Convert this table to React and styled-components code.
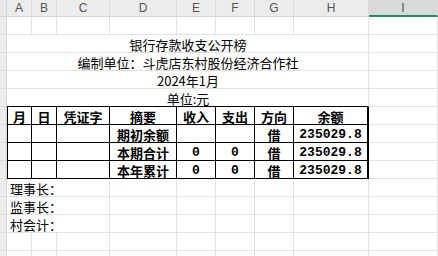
import React from "react";
import styled, { createGlobalStyle, css } from "styled-components";

const Global = createGlobalStyle`
  html, body { margin: 0; padding: 0; background: #fff; }
  body { font-family: "Noto Sans CJK SC", "Noto Sans", sans-serif; overflow: hidden; }
`;

const COLS = ["A", "B", "C", "D", "E", "F", "G", "H", "I"];

const Sheet = styled.div`
  display: grid;
  grid-template-columns: 7px 25px 25px 53px 67px 39px 39px 39px 75px 69px;
  grid-template-rows: 17px;
  grid-auto-rows: 18px;
  width: 438px;
  height: 256px;
  overflow: hidden;
`;

const Corner = styled.div`
  background: #e9e9e9;
  border-right: 1px solid #d6d6d6;
  border-bottom: 1px solid #d6d6d6;
  box-sizing: border-box;
`;

const ColHead = styled.div`
  box-sizing: border-box;
  background: ${(p) => (p.$active ? "#d9d9d9" : "#ececec")};
  border-right: 1px solid #d9d9d9;
  border-bottom: ${(p) => (p.$active ? "2px solid #1a8f62" : "1px solid #d6d6d6")};
  display: flex;
  align-items: center;
  justify-content: center;
  font-family: "Liberation Sans", Arial, sans-serif;
  font-size: 12px;
  color: #555;
  padding-top: ${(p) => (p.$active ? "1px" : "0")};
`;

const RowHead = styled.div`
  box-sizing: border-box;
  background: #ececec;
  border-right: 1px solid #d6d6d6;
  border-bottom: 1px solid #dcdcdc;
`;

const Cell = styled.div`
  box-sizing: border-box;
  grid-column: span ${(p) => p.$span || 1};
  border-right: 1px solid #e1e1e1;
  border-bottom: 1px solid #e1e1e1;
  display: flex;
  align-items: center;
  justify-content: ${(p) => p.$align || "flex-start"};
  padding: 2px 2px 0 3px;
  font-size: 13px;
  color: #000;
  white-space: nowrap;
  overflow: visible;
  line-height: 1;
  ${(p) =>
    p.$bottomBlack &&
    css`
      border-bottom: 1px solid #000;
    `}
`;

const TCell = styled(Cell)`
  padding: 1px 1px 0;
  border-right: 1px solid #000;
  border-bottom: 1px solid #000;
  justify-content: center;
  font-weight: 700;
  ${(p) =>
    p.$first &&
    css`
      border-left: 1px solid #000;
    `}
  ${(p) =>
    p.$last &&
    css`
      border-right: 2px solid #000;
    `}
  ${(p) =>
    p.$mono &&
    css`
      font-family: "Liberation Mono", "Noto Sans CJK SC", monospace;
      font-size: 13px;
    `}
`;

const TableCells = ({ cells }) =>
  cells.map((c, i) => (
    <TCell key={i} $first={i === 0} $last={i === 7} $mono={c.mono}>
      {c.t}
    </TCell>
  ));

const Row = ({ children }) => (
  <>
    <RowHead />
    {children}
  </>
);

const EmptyRow = () => (
  <Row>
    {COLS.map((c) => (
      <Cell key={c} />
    ))}
  </Row>
);

const body = [
  ["", "", "", "期初余额", "", "", "借", "235029.8"],
  ["", "", "", "本期合计", "0", "0", "借", "235029.8"],
  ["", "", "", "本年累计", "0", "0", "借", "235029.8"],
];

const heads = ["月", "日", "凭证字", "摘要", "收入", "支出", "方向", "余额"];

export default function App() {
  return (
    <>
      <Global />
      <Sheet>
        <Corner />
        {COLS.map((c) => (
          <ColHead key={c} $active={c === "I"}>
            {c}
          </ColHead>
        ))}
        <EmptyRow />
        <Row>
          <Cell $span={8} $align="center">银行存款收支公开榜</Cell>
          <Cell />
        </Row>
        <Row>
          <Cell $span={8} $align="center">编制单位：斗虎店东村股份经济合作社</Cell>
          <Cell />
        </Row>
        <Row>
          <Cell $span={8} $align="center">2024年1月</Cell>
          <Cell />
        </Row>
        <Row>
          <Cell $span={8} $align="center" $bottomBlack>
            单位:元
          </Cell>
          <Cell />
        </Row>
        <Row>
          <TableCells cells={heads.map((t) => ({ t }))} />
          <Cell />
        </Row>
        {body.map((r, i) => (
          <Row key={i}>
            <TableCells cells={r.map((t, j) => ({ t, mono: j >= 4 && t !== "借" }))} />
            <Cell />
          </Row>
        ))}
        {["理事长：", "监事长：", "村会计："].map((t) => (
          <Row key={t}>
            <Cell $span={3}>{t}</Cell>
            {COLS.slice(3).map((c) => (
              <Cell key={c} />
            ))}
          </Row>
        ))}
        <EmptyRow />
        <EmptyRow />
      </Sheet>
    </>
  );
}
